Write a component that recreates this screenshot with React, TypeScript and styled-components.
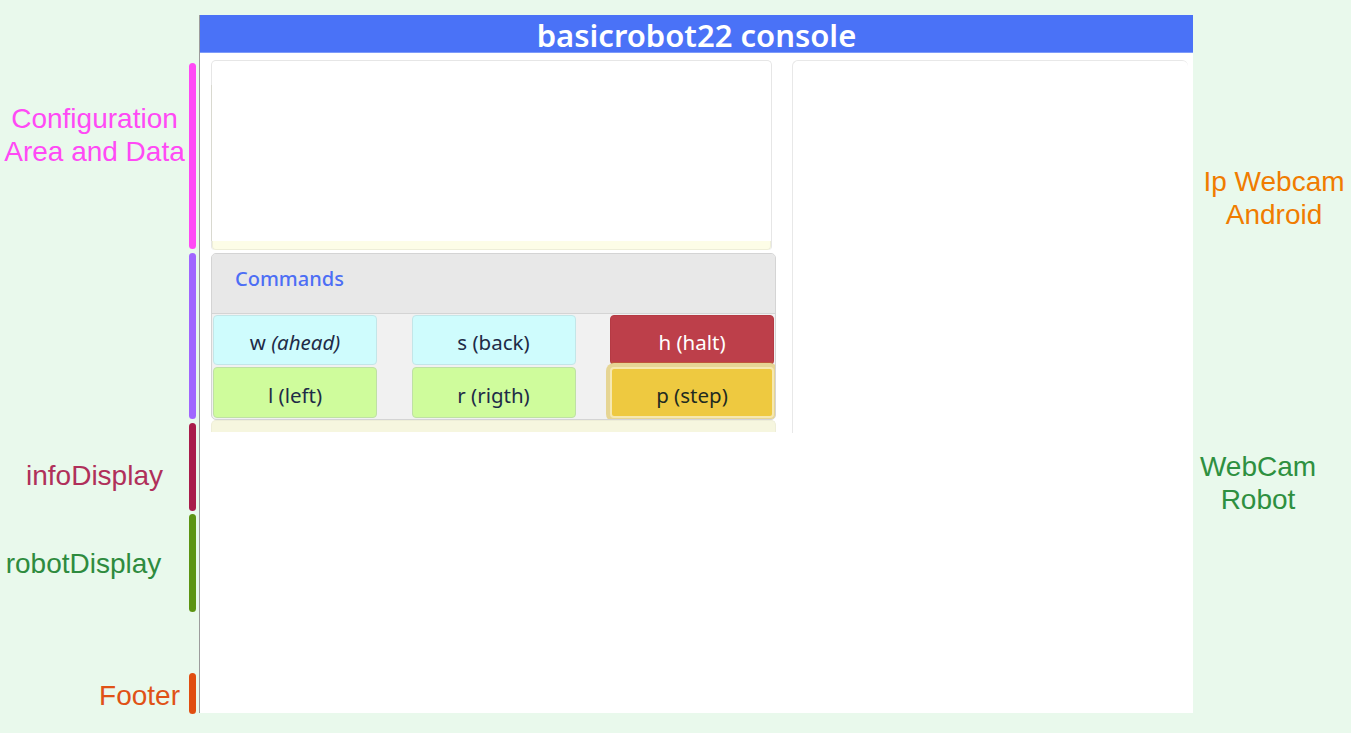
import React from 'react';
import styled, { createGlobalStyle, css } from 'styled-components';

const GlobalStyle = createGlobalStyle`
  html, body {
    margin: 0;
    padding: 0;
    background: #e9f9ec;
  }
  * { box-sizing: border-box; }
`;

// Page: annotations | console | annotations
const Page = styled.div`
  display: grid;
  grid-template-columns: 199px 994px 1fr;
  width: 1351px;
  height: 733px;
  overflow: hidden;
  background: #e9f9ec;
  font-family: 'Liberation Sans', Arial, sans-serif;
`;

const LeftNotes = styled.div`
  display: flex;
  flex-direction: column;
  padding-top: 63px;
`;

const NoteRow = styled.div<{ $h: number; $mt?: number }>`
  display: flex;
  align-items: center;
  height: ${p => p.$h}px;
  margin-top: ${p => p.$mt ?? 0}px;
`;

const NoteLabel = styled.div<{ $color: string; $align?: string; $pr?: number; $pb?: number; $pt?: number }>`
  width: 189px;
  color: ${p => p.$color};
  font-size: 28px;
  line-height: 33px;
  text-align: ${p => p.$align ?? 'center'};
  padding-right: ${p => p.$pr ?? 0}px;
  padding-bottom: ${p => p.$pb ?? 0}px;
  padding-top: ${p => p.$pt ?? 0}px;
  white-space: nowrap;
`;

const NoteBar = styled.div<{ $color: string }>`
  width: 7px;
  height: 100%;
  border-radius: 4px;
  background: ${p => p.$color};
`;

const RightNotes = styled.div`
  display: flex;
  flex-direction: column;
  padding-top: 165px;
`;

const SideLabel = styled.div<{ $color: string; $mt?: number; $pr?: number; $pl?: number }>`
  color: ${p => p.$color};
  font-size: 28px;
  line-height: 33px;
  text-align: center;
  margin-top: ${p => p.$mt ?? 0}px;
  padding-right: ${p => p.$pr ?? 0}px;
  padding-left: ${p => p.$pl ?? 0}px;
`;

// Console panel
const Console = styled.div`
  margin-top: 15px;
  height: 698px;
  background: #ffffff;
  border-left: 1px solid #9c9c9c;
  display: flex;
  flex-direction: column;
  font-family: 'Noto Sans', 'Open Sans', sans-serif;
`;

const Header = styled.div`
  height: 38px;
  padding-top: 4px;
  background: #4a72f7;
  border-bottom: 1px solid #7d9bfa;
  color: #ffffff;
  font-size: 31px;
  font-weight: 600;
  line-height: 33px;
  text-align: center;
`;

const Body = styled.div`
  display: flex;
  gap: 16px;
  padding: 7px 5px 0 11px;
  align-items: flex-start;
`;

const LeftCol = styled.div`
  width: 565px;
  display: flex;
  flex-direction: column;
`;

const ConfigCard = styled.div`
  width: 561px;
  height: 190px;
  border: 1px solid #e6e6e6;
  border-bottom: none;
  border-radius: 5px 5px 4px 4px;
  display: flex;
  flex-direction: column;
`;

const ConfigArea = styled.div`
  flex: 1;
  border-left: 1px solid #d9d9d0;
  margin-top: 24px;
  margin-left: -1px;
`;

const CreamStrip = styled.div<{ $h: number; $top?: boolean }>`
  height: ${p => p.$h}px;
  background: ${p => (p.$top ? '#f6f6df' : '#fdfde7')};
  border: 1px solid #eeeed8;
  ${p =>
    p.$top
      ? css`
          border-bottom: none;
          border-radius: 5px 5px 0 0;
        `
      : css`
          border-top: none;
          border-radius: 0 0 4px 4px;
        `}
`;

const CommandsCard = styled.div`
  margin-top: 3px;
  border: 1px solid #d4d4d4;
  border-radius: 5px;
  background: #f1f1f1;
  overflow: hidden;
`;

const CommandsHeader = styled.div`
  height: 60px;
  background: #e8e8e8;
  border-bottom: 1px solid #d4d4d4;
  padding-left: 23px;
  color: #4d6ef5;
  font-size: 20px;
  font-weight: 500;
  line-height: 50px;
`;

const ButtonGrid = styled.div`
  display: grid;
  grid-template-columns: repeat(3, 164px);
  grid-template-rows: 50px 51px;
  justify-content: space-between;
  row-gap: 2px;
  padding: 1px;
`;

type Tone = 'cyan' | 'green' | 'red' | 'yellow';

const tones: Record<Tone, { bg: string; border: string; fg: string }> = {
  cyan: { bg: '#cffcfd', border: '#c3e6e8', fg: '#1e2b47' },
  green: { bg: '#cffc9c', border: '#bfe0a6', fg: '#1e2b47' },
  red: { bg: '#bd3f4a', border: '#b53a44', fg: '#ffffff' },
  yellow: { bg: '#eec940', border: '#f6e7a9', fg: '#1e2b20' },
};

const CmdButton = styled.button<{ $tone: Tone; $focus?: boolean }>`
  width: 100%;
  height: 100%;
  border-radius: 4px;
  border: 1px solid ${p => tones[p.$tone].border};
  background: ${p => tones[p.$tone].bg};
  color: ${p => tones[p.$tone].fg};
  font-family: 'Noto Sans', 'Open Sans', sans-serif;
  font-size: 20.5px;
  padding: 4px 0 0;
  cursor: pointer;
  ${p =>
    p.$tone === 'red' &&
    css`
      box-shadow: inset 0 -2px 0 #c0563a;
    `}
  ${p =>
    p.$focus &&
    css`
      border: 2px solid #f6e8b0;
      box-shadow: 0 0 0 4px #e6d594;
    `}

  em {
    font-style: italic;
  }
`;

const RightCard = styled.div`
  flex: 1;
  height: 373px;
  border-top: 1px solid #e8e8e8;
  border-left: 1px solid #e8e8e8;
  border-radius: 6px 6px 0 0;
`;

const commands: { key: string; label: React.ReactNode; tone: Tone; focus?: boolean }[] = [
  { key: 'w', label: <>w <em>(ahead)</em></>, tone: 'cyan' },
  { key: 's', label: 's (back)', tone: 'cyan' },
  { key: 'h', label: 'h (halt)', tone: 'red' },
  { key: 'l', label: 'l (left)', tone: 'green' },
  { key: 'r', label: 'r (rigth)', tone: 'green' },
  { key: 'p', label: 'p (step)', tone: 'yellow', focus: true },
];

export default function App() {
  return (
    <>
      <GlobalStyle />
      <Page>
        <LeftNotes>
          <NoteRow $h={186}>
            <NoteLabel $color="#ff4af5" $pb={42}>
              Configuration
              <br />
              Area and Data
            </NoteLabel>
            <NoteBar $color="#ff4af5" />
          </NoteRow>
          <NoteRow $h={166} $mt={4}>
            <NoteLabel $color="#a066ff" />
            <NoteBar $color="#a066ff" />
          </NoteRow>
          <NoteRow $h={88} $mt={4}>
            <NoteLabel $color="#b0305a" $pt={16}>infoDisplay</NoteLabel>
            <NoteBar $color="#a81c4a" />
          </NoteRow>
          <NoteRow $h={98} $mt={3}>
            <NoteLabel $color="#2e8b3e" $pr={22}>robotDisplay</NoteLabel>
            <NoteBar $color="#5c9412" />
          </NoteRow>
          <NoteRow $h={41} $mt={61}>
            <NoteLabel $color="#e05216" $align="right" $pr={9} $pt={4}>Footer</NoteLabel>
            <NoteBar $color="#e04e10" />
          </NoteRow>
        </LeftNotes>

        <Console>
          <Header>basicrobot22 console</Header>
          <Body>
            <LeftCol>
              <ConfigCard>
                <ConfigArea />
                <CreamStrip $h={9} />
              </ConfigCard>
              <CommandsCard>
                <CommandsHeader>Commands</CommandsHeader>
                <ButtonGrid>
                  {commands.map(c => (
                    <CmdButton key={c.key} $tone={c.tone} $focus={c.focus}>
                      {c.label}
                    </CmdButton>
                  ))}
                </ButtonGrid>
              </CommandsCard>
              <CreamStrip $h={12} $top />
            </LeftCol>
            <RightCard />
          </Body>
        </Console>

        <RightNotes>
          <SideLabel $color="#f07c00" $pl={4}>
            Ip Webcam
            <br />
            Android
          </SideLabel>
          <SideLabel $color="#2e9040" $mt={219} $pr={28}>
            WebCam
            <br />
            Robot
          </SideLabel>
        </RightNotes>
      </Page>
    </>
  );
}
